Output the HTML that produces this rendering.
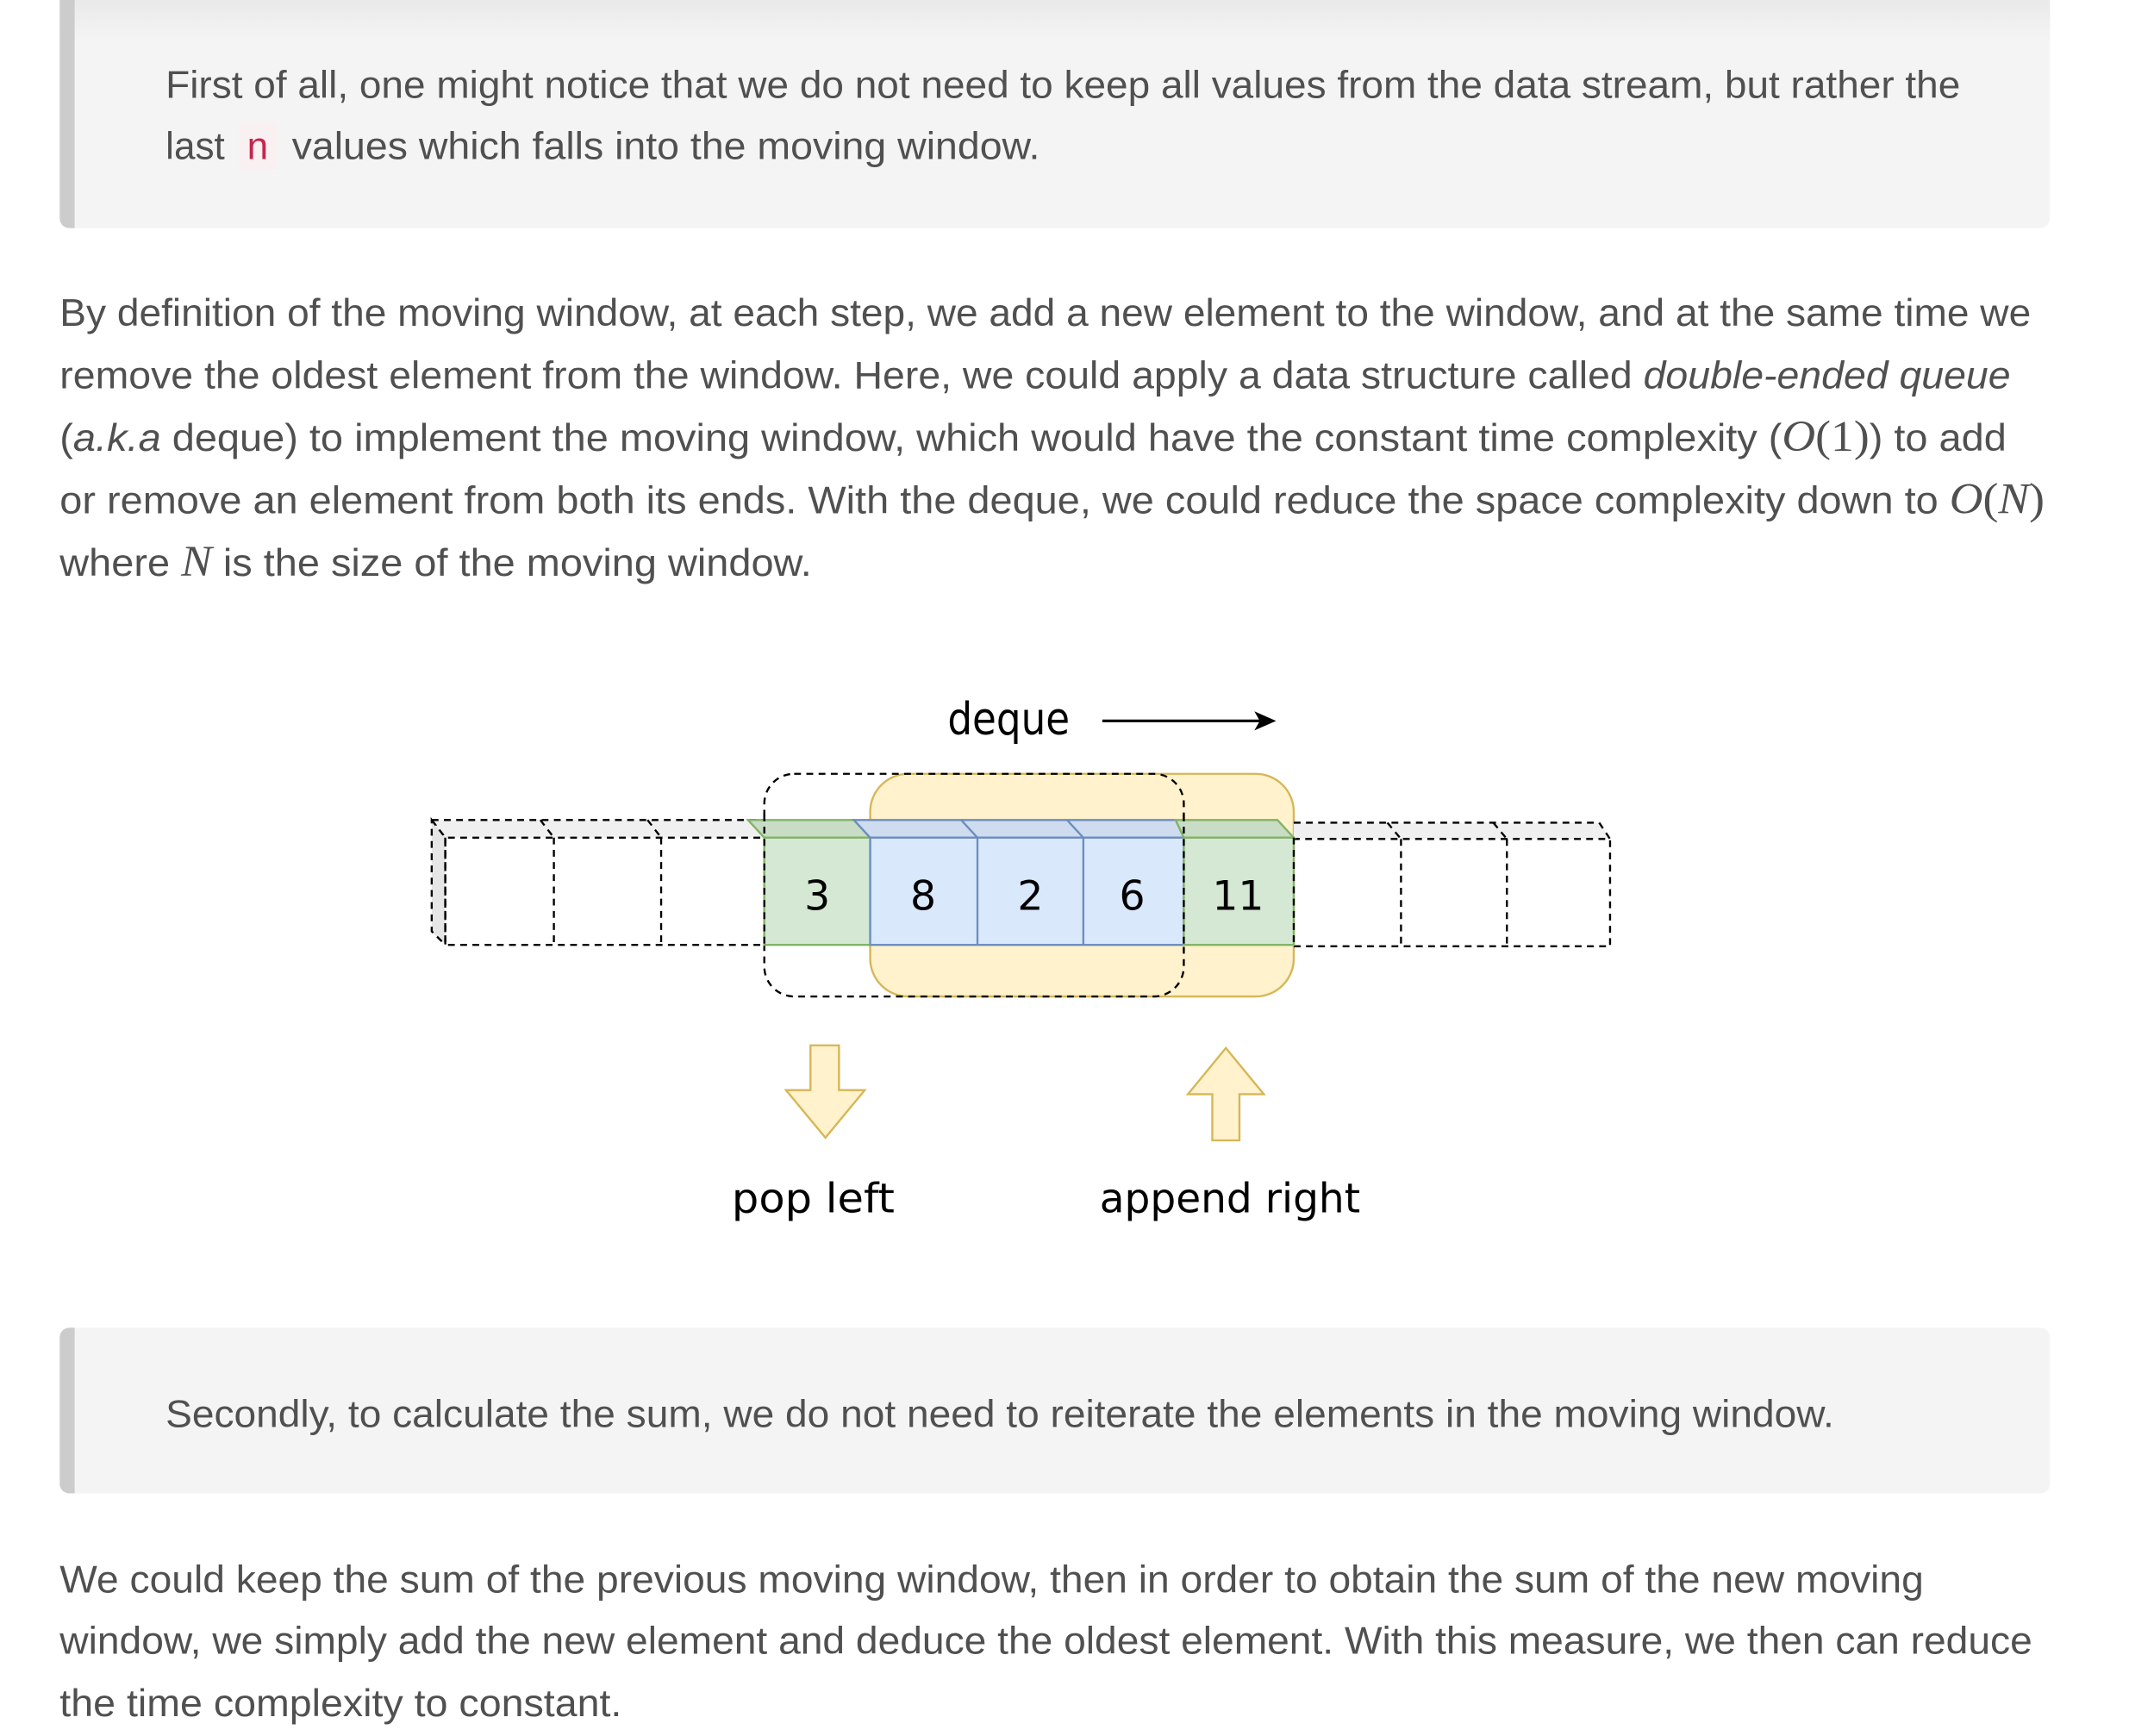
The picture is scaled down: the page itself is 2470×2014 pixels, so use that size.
<!DOCTYPE html>
<html><head><meta charset="utf-8"><style>
html,body{margin:0;padding:0;background:#fff;width:2470px;height:2014px;overflow:hidden}
svg{display:block}
.t{font-family:"Liberation Sans",sans-serif;font-size:28px;fill:#505050}
.m{font-family:"Liberation Serif",serif;font-style:italic}
.h{font-family:"Comic Sans MS","DejaVu Sans",sans-serif;font-size:33px;fill:#000}
.c{font-family:"Comic Sans MS","DejaVu Sans",sans-serif;font-size:30px;fill:#000;text-anchor:middle}
</style></head><body>
<svg width="2470" height="2014" viewBox="0 0 1568.25 1278.73" xmlns="http://www.w3.org/2000/svg">
<defs><linearGradient id="g" x1="0" y1="0" x2="0" y2="1"><stop offset="0" stop-color="#e6e6e6"/><stop offset="1" stop-color="#f4f4f4"/></linearGradient></defs>
<rect x="44" y="-10" width="1466" height="178" rx="7" fill="#f4f4f4"/>
<rect x="44" y="-10" width="1466" height="40" fill="url(#g)"/>
<path d="M51 -10 h4 v178 h-4 a7 7 0 0 1 -7 -7 v-164 a7 7 0 0 1 7 -7z" fill="#ccc"/>
<text class="t" x="122" y="72" textLength="1322" lengthAdjust="spacingAndGlyphs">First of all, one might notice that we do not need to keep all values from the data stream, but rather the</text>
<rect x="176" y="90" width="28" height="36" rx="3" fill="#f9f0f2"/>
<text class="t" x="122" y="117">last</text>
<text class="t" x="182" y="117" style="fill:#c7254e">n</text>
<text class="t" x="215" y="117" textLength="551" lengthAdjust="spacingAndGlyphs">values which falls into the moving window.</text>
<text class="t" x="44" y="240" textLength="1452" lengthAdjust="spacingAndGlyphs">By definition of the moving window, at each step, we add a new element to the window, and at the same time we</text>
<text class="t" x="44" y="286" textLength="1437" lengthAdjust="spacingAndGlyphs">remove the oldest element from the window. Here, we could apply a data structure called <tspan font-style="italic">double-ended queue</tspan></text>
<text class="t" x="44" y="332" textLength="1434" lengthAdjust="spacingAndGlyphs">(<tspan font-style="italic">a.k.a</tspan> deque) to implement the moving window, which would have the constant time complexity (<tspan class="m" font-size="32">O</tspan><tspan font-family="Liberation Serif" font-size="32">(1)</tspan>) to add</text>
<text class="t" x="44" y="378" textLength="1462" lengthAdjust="spacingAndGlyphs">or remove an element from both its ends. With the deque, we could reduce the space complexity down to <tspan class="m" font-size="32">O</tspan><tspan font-family="Liberation Serif" font-size="32">(</tspan><tspan class="m" font-size="32">N</tspan><tspan font-family="Liberation Serif" font-size="32">)</tspan></text>
<text class="t" x="44" y="424" textLength="554" lengthAdjust="spacingAndGlyphs">where <tspan class="m" font-size="32">N</tspan> is the size of the moving window.</text>
<text class="h" x="698" y="541" textLength="90" lengthAdjust="spacingAndGlyphs">deque</text>
<line x1="812" y1="531" x2="934" y2="531" stroke="#000" stroke-width="2"/>
<path d="M924 524 L940 531 L924 538 L928 531Z" fill="#000"/>
<rect x="641" y="570" width="312" height="164" rx="28" fill="#fff2cc" stroke="#d6b656" stroke-width="1.5"/>
<rect x="563" y="570" width="309" height="164" rx="22" fill="none" stroke="#000" stroke-width="1.5" stroke-dasharray="5 4"/>
<g stroke="#000" stroke-width="1.5" stroke-dasharray="5 4" fill="none">
<path d="M318 604 L563 604 L563 617 L328 617 Z" fill="#f0f0f0"/>
<path d="M318 604 L328 617 L328 696 L318 686 Z" fill="#e6e6e6"/>
<path d="M328 617 V696 H563"/>
<line x1="408" y1="617" x2="408" y2="696"/><line x1="487" y1="617" x2="487" y2="696"/>
<line x1="398" y1="604" x2="408" y2="617"/><line x1="477" y1="604" x2="487" y2="617"/>
<path d="M953 606 L1178 606 L1186 618 L953 618" fill="#f0f0f0"/>
<path d="M953 697 H1186 V618"/>
<line x1="1032" y1="618" x2="1032" y2="697"/><line x1="1110" y1="618" x2="1110" y2="697"/>
<line x1="1022" y1="606" x2="1032" y2="618"/><line x1="1100" y1="606" x2="1110" y2="618"/>
</g>
<g stroke-width="1.5">
<path d="M551 604 L629 604 L641 617 L563 617Z" fill="#c9dcc6" stroke="#82b366"/>
<rect x="563" y="617" width="78" height="79" fill="#d5e8d4" stroke="#82b366"/>
<path d="M629 604 L866 604 L872 617 L641 617Z" fill="#cfdcef" stroke="#6c8ebf"/>
<line x1="708" y1="604" x2="720" y2="617" stroke="#6c8ebf"/><line x1="786" y1="604" x2="798" y2="617" stroke="#6c8ebf"/>
<rect x="641" y="617" width="231" height="79" fill="#dae8fc" stroke="#6c8ebf"/>
<line x1="720" y1="617" x2="720" y2="696" stroke="#6c8ebf"/><line x1="798" y1="617" x2="798" y2="696" stroke="#6c8ebf"/>
<path d="M866 604 L941 604 L953 617 L872 617Z" fill="#c9dcc6" stroke="#82b366"/>
<rect x="872" y="617" width="81" height="79" fill="#d5e8d4" stroke="#82b366"/>
</g>
<line x1="563" y1="600" x2="563" y2="700" stroke="#000" stroke-width="1.5" stroke-dasharray="5 4"/>
<line x1="872" y1="600" x2="872" y2="700" stroke="#000" stroke-width="1.5" stroke-dasharray="5 4"/>
<line x1="953" y1="617" x2="953" y2="697" stroke="#000" stroke-width="1.5" stroke-dasharray="5 4"/>
<text class="c" x="602" y="670">3</text>
<text class="c" x="680" y="670">8</text>
<text class="c" x="759" y="670">2</text>
<text class="c" x="834" y="670">6</text>
<text class="c" x="912" y="670">11</text>
<path d="M597 770 H618 V803 H637 L608 838 L579 803 H597Z" fill="#fff2cc" stroke="#d6b656" stroke-width="1.5"/>
<path d="M903 772 L931 806 H913 V840 H893 V806 H875Z" fill="#fff2cc" stroke="#d6b656" stroke-width="1.5"/>
<text class="c" x="599" y="893" font-size="33" textLength="120" lengthAdjust="spacingAndGlyphs">pop left</text>
<text class="c" x="906" y="893" font-size="33" textLength="192" lengthAdjust="spacingAndGlyphs">append right</text>
<rect x="44" y="978" width="1466" height="122" rx="7" fill="#f4f4f4"/>
<path d="M51 978 h4 v122 h-4 a7 7 0 0 1 -7 -7 v-108 a7 7 0 0 1 7 -7z" fill="#ccc"/>
<text class="t" x="122" y="1051" textLength="1229" lengthAdjust="spacingAndGlyphs">Secondly, to calculate the sum, we do not need to reiterate the elements in the moving window.</text>
<text class="t" x="44" y="1173" textLength="1373" lengthAdjust="spacingAndGlyphs">We could keep the sum of the previous moving window, then in order to obtain the sum of the new moving</text>
<text class="t" x="44" y="1218" textLength="1453" lengthAdjust="spacingAndGlyphs">window, we simply add the new element and deduce the oldest element. With this measure, we then can reduce</text>
<text class="t" x="44" y="1264" textLength="414" lengthAdjust="spacingAndGlyphs">the time complexity to constant.</text>
</svg>
</body></html>
